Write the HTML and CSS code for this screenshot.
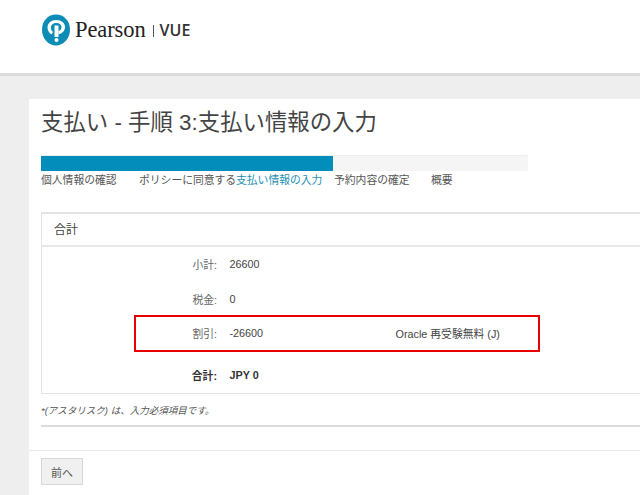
FILE: index.html
```html
<!DOCTYPE html>
<html lang="ja">
<head>
<meta charset="utf-8">
<title>支払い</title>
<link rel="stylesheet" href="styles.css">
</head>
<body>
<header class="header">
  <svg class="logo-mark" viewBox="0 0 28 32" width="28" height="32" aria-hidden="true">
    <path d="M14 .5C21.500.5 28 6.500 28 15.500 28 25 21 31.500 14 31.500 6.500 31.500 0 25 0 15.500 0 6.500 6.500.5 14 .5Z" fill="#0d8db5"/>
    <path d="M9.300 20.500C6.800 18.800 5.500 16.200 5.500 13.500 5.500 9 9.200 6 14.500 6 19.500 6 23 9 23 13 23 17 19.800 19.700 16.500 20.200L16.500 17C18.300 16.500 19.500 15 19.500 13.200 19.500 10.800 17.500 9 14.500 9 11.200 9 8.900 10.800 8.900 13.800 8.900 15.600 9.700 17 11.200 18Z" fill="#fff"/>
    <rect x="12.500" y="11.500" width="4" height="11.500" fill="#fff"/>
    <circle cx="14.500" cy="26" r="2" fill="#fff"/>
  </svg>
  <span class="logo-name">Pearson</span>
  <span class="logo-sep"></span>
  <span class="logo-vue">VUE</span>
</header>
<main class="panel">
  <h1 class="title">支払い - 手順 3:支払い情報の入力</h1>
  <div class="progress"><div class="progress-fill"></div></div>
  <ol class="steps">
    <li class="step step-1">個人情報の確認</li>
    <li class="step step-2">ポリシーに同意する</li>
    <li class="step step-3 is-current">支払い情報の入力</li>
    <li class="step step-4">予約内容の確定</li>
    <li class="step">概要</li>
  </ol>
  <section class="card">
    <h2 class="card-head">合計</h2>
    <div class="card-body">
      <div class="row row-sub"><span class="label">小計:</span><span class="value">26600</span></div>
      <div class="row row-tax"><span class="label">税金:</span><span class="value">0</span></div>
      <div class="row row-discount">
        <span class="label">割引:</span><span class="value">-26600</span><span class="note">Oracle 再受験無料 (J)</span>
      </div>
      <div class="row row-total"><span class="label">合計:</span><span class="value">JPY 0</span></div>
    </div>
  </section>
  <p class="hint">*(アスタリスク) は、入力必須項目です。</p>
  <div class="rule"></div>
  <div class="actions"><button class="btn" type="button">前へ</button></div>
</main>
</body>
</html>
```
FILE: styles.css
```css
* { box-sizing: border-box; }
html, body { margin: 0; height: 495px; overflow: hidden; }
body {
  background: #eeeeee;
  font-family: "Liberation Sans", "Noto Sans CJK JP", sans-serif;
  color: #555;
}
.header {
  height: 76px;
  background: #fff;
  border-bottom: 3px solid #dcdcdc;
  display: flex;
  align-items: flex-start;
  padding: 14px 0 0 42px;
}
.logo-mark { display: block; }
.logo-name {
  font-family: "Liberation Serif", serif;
  font-size: 22.5px;
  line-height: 32px;
  color: #222;
  margin-left: 5px;
  letter-spacing: -0.1px;
}
.logo-sep {
  width: 1px;
  height: 12px;
  background: #555;
  margin: 11px 0 0 7px;
}
.logo-vue {
  font-family: "Open Sans", sans-serif;
  font-size: 16px;
  line-height: 32px;
  font-weight: 600;
  color: #333;
  margin-left: 6px;
}
.panel {
  background: #fff;
  margin: 23px 0 0 29px;
  height: 396px;
  padding: 0 0 0 12px;
}
.title {
  margin: 0;
  padding-top: 9px;
  font-size: 22.4px;
  line-height: 30px;
  font-weight: 400;
  color: #444;
}
.progress {
  margin-top: 17px;
  width: 487px;
  height: 16px;
  background: #f5f5f5;
  border-top: 1px solid #ececec;
  border-radius: 2px;
}
.progress-fill {
  width: 292px;
  height: 15px;
  background: #028dbb;
}
.steps {
  display: flex;
  list-style: none;
  margin: 1px 0 0;
  padding: 0;
  font-size: 10.8px;
  line-height: 16px;
  color: #555;
  white-space: nowrap;
}
.step-1 { width: 98px; }
.step-2 { width: 97px; }
.step-3 { width: 98px; }
.step-4 { width: 97px; }
.is-current { color: #1f8fb3; }
.card {
  margin-top: 24px;
  border: 1px solid #e4e4e4;
  border-top-width: 2px;
  border-right: 0;
  height: 182px;
}
.card-head {
  margin: 0;
  height: 33px;
  padding: 0 0 0 12px;
  font-size: 12px;
  line-height: 32px;
  font-weight: 400;
  color: #444;
  border-bottom: 2px solid #e8e8e8;
}
.card-body { font-size: 10.8px; color: #555; }
.row {
  display: flex;
  align-items: center;
}
.label { width: 175px; text-align: right; color: #666; }
.value { margin-left: 12.5px; width: 166px; color: #444; }
.note { color: #444; }
.row-sub { height: 35px; margin-top: -1px; }
.row-tax { height: 35px; }
.row-discount {
  width: 406px;
  margin-left: 92px;
  height: 37px;
  margin-top: -1px;
  padding-bottom: 2px;
  border: 2px solid #e80000;
}
.row-discount .label { width: 81px; }
.row-total { height: 38px; margin-top: 4px; font-weight: 700; }
.row-total .label, .row-total .value { color: #333; }
.hint {
  margin: 10px 0 0;
  font-size: 9.5px;
  line-height: 14px;
  font-style: italic;
  color: #555;
}
.rule {
  margin-top: 7px;
  height: 2px;
  background: #dcdcdc;
}
.actions {
  margin: 23px 0 0 -12px;
  padding: 7px 0 0 12px;
  border-top: 1px solid #e8e8e8;
}
.btn {
  display: block;
  width: 42px;
  height: 27px;
  padding: 0;
  background: #f0f0f0;
  border: 1px solid #d8d8d8;
  font-family: inherit;
  font-size: 11px;
  color: #555;
}
```
